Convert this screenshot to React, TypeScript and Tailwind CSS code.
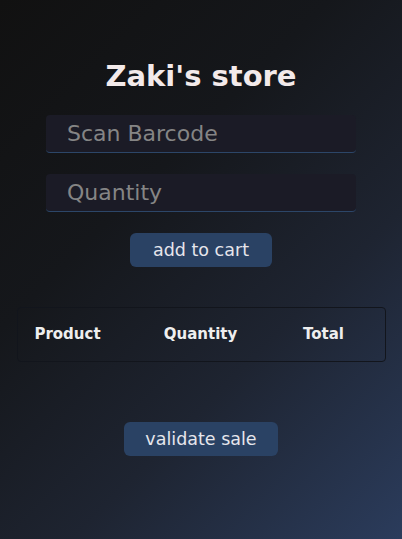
export default function App() {
  return (
    <div
      className="min-h-[539px] w-full bg-[linear-gradient(135deg,#111111_0%,#15171b_35%,#1e2431_65%,#2b3c5c_100%)] flex flex-col items-center"
      style={{ fontFamily: '"DejaVu Sans", sans-serif' }}
    >
      <h1 className="mt-[59px] text-[29px] leading-[34px] font-bold text-[#f3eaea]">
        Zaki's store
      </h1>

      <div className="mt-[22px] flex flex-col gap-[21px] w-[310px]">
        <input
          placeholder="Scan Barcode"
          className="h-[38px] w-full rounded-[4px] bg-[#1b1b26] border-b border-[#2c4668] pl-[21px] text-[22px] text-[#ddd] placeholder:text-[#858585] outline-none"
        />
        <input
          placeholder="Quantity"
          className="h-[38px] w-full rounded-[4px] bg-[#1b1b26] border-b border-[#2c4668] pl-[21px] text-[22px] text-[#ddd] placeholder:text-[#858585] outline-none"
        />
      </div>

      <button className="mt-[21px] h-[34px] w-[142px] rounded-[6px] bg-[#2a4264] text-[17.5px] text-[#e6e6ec]">
        add to cart
      </button>

      <div className="mt-[40px] w-[369px] h-[55px] rounded-[4px] border border-[#12151c] grid grid-cols-[100px_166px_80px] items-center">
        <span className="text-center text-[15px] font-bold text-[#eeeeee]">Product</span>
        <span className="text-center text-[15px] font-bold text-[#eeeeee]">Quantity</span>
        <span className="text-center text-[15px] font-bold text-[#eeeeee]">Total</span>
      </div>

      <button className="mt-[60px] h-[34px] w-[154px] rounded-[6px] bg-[#2a4264] text-[17.5px] text-[#e6e6ec]">
        validate sale
      </button>
    </div>
  );
}
